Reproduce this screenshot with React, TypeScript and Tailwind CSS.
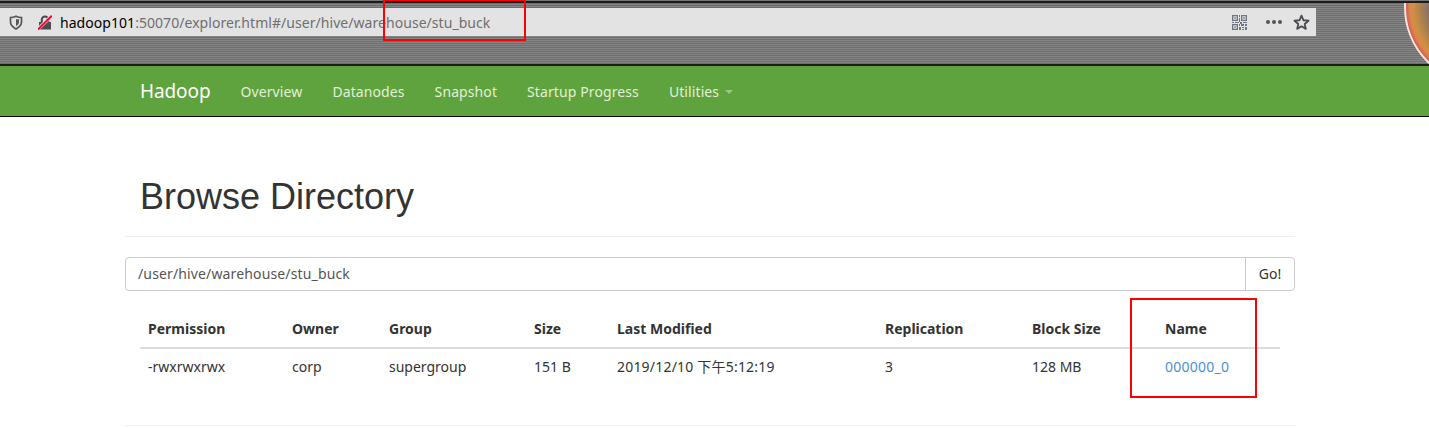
const font = 'font-["Noto_Sans","Noto_Sans_CJK_SC",sans-serif]';

const navItems = ['Overview', 'Datanodes', 'Snapshot', 'Startup Progress'];

const headers = [
  { label: 'Permission', w: 'w-[144px]' },
  { label: 'Owner', w: 'w-[97px]' },
  { label: 'Group', w: 'w-[145px]' },
  { label: 'Size', w: 'w-[83px]' },
  { label: 'Last Modified', w: 'w-[268px]' },
  { label: 'Replication', w: 'w-[147px]' },
  { label: 'Block Size', w: 'w-[133px]' },
  { label: 'Name', w: 'flex-1' },
];

const row = ['-rwxrwxrwx', 'corp', 'supergroup', '151 B', '2019/12/10 下午5:12:19', '3', '128 MB'];

function ShieldIcon() {
  return (
    <svg width="14" height="15" viewBox="0 0 14 15" fill="none">
      <path d="M1.5 2.5 C4.5 2.5 5.5 2 7 1.2 C8.5 2 9.5 2.5 12.5 2.5 V7 C12.5 10 10 12.4 7 14 C4 12.4 1.5 10 1.5 7 Z" stroke="#55555a" strokeWidth="1.7" />
      <path d="M7 4.2 H10 V7 C10 8.8 8.6 10.2 7 11.2 Z" fill="#55555a" />
    </svg>
  );
}

function InsecureLock() {
  return (
    <svg width="14" height="15" viewBox="0 0 14 15" fill="none">
      <path d="M1 7 H13 V14.5 H1 Z" fill="#4a4a4f" />
      <path d="M3.8 7 V4.6 A3.2 3.2 0 0 1 10.2 4.6 V7" stroke="#4a4a4f" strokeWidth="2" />
      <path d="M0 14 L13.5 1" stroke="#e3e3e3" strokeWidth="3.4" />
      <path d="M0 14.5 L13.8 0.8" stroke="#ff0039" strokeWidth="2" />
    </svg>
  );
}

function QrIcon() {
  return (
    <svg width="15" height="15" viewBox="0 0 15 15" fill="#6f7680">
      <path fillRule="evenodd" d="M0 0H6V6H0ZM1.3 1.3V4.7H4.7V1.3ZM9 0H15V6H9ZM10.3 1.3V4.7H13.7V1.3ZM0 9H6V15H0ZM1.3 10.3V13.7H4.7V10.3Z" />
      <path d="M2.3 2.3H3.7V3.7H2.3ZM11.3 2.3H12.7V3.7H11.3ZM2.3 11.3H3.7V12.7H2.3ZM7 0H8V2H7ZM7 3H8V7H7ZM0 7H2V8H0ZM3 7H7V8H3ZM8 7H10V9H8ZM11 7H15V8H11ZM7 9H8V11H7ZM9 9H12V11H9ZM13 9H15V11H13ZM7 12H9V15H7ZM10 12H12V13H10ZM13 12H15V15H13ZM10 14H12V15H10Z" />
    </svg>
  );
}

function StarIcon() {
  return (
    <svg width="17" height="17" viewBox="0 0 16 16" fill="none">
      <path d="M8 1.6 L9.9 5.9 L14.6 6.3 L11 9.4 L12.1 14 L8 11.6 L3.9 14 L5 9.4 L1.4 6.3 L6.1 5.9 Z" stroke="#4a4a4f" strokeWidth="1.7" strokeLinejoin="round" />
    </svg>
  );
}

function BrowserBar() {
  return (
    <div className="h-[66px] bg-[#777] pt-px">
      <div className="relative h-[65px] overflow-hidden border-y-2 border-[#1c1c1c] bg-[repeating-linear-gradient(180deg,#6e6e6e_0px,#6e6e6e_1px,#858585_1px,#858585_2px)] pt-[5px]">
        <div className="flex h-[28px] w-[1316px] items-center bg-[#e3e3e3] pl-[9px] pr-[6px] text-[14px]">
          <ShieldIcon />
          <span className="ml-[15px]"><InsecureLock /></span>
          <span className="ml-[8px] tracking-[0.05px] text-black">hadoop101<span className="text-[#6f6f6f]">:50070/explorer.html#/user/hive/warehouse/stu_buck</span></span>
          <span className="ml-auto"><QrIcon /></span>
          <span className="ml-[19px] flex gap-[2px]">
            <i className="size-[4px] rounded-full bg-[#55555a]" />
            <i className="size-[4px] rounded-full bg-[#55555a]" />
            <i className="size-[4px] rounded-full bg-[#55555a]" />
          </span>
          <span className="ml-[11px]"><StarIcon /></span>
        </div>
        {/* desktop wallpaper peeking through at the right edge */}
        <div className="absolute left-[1404px] top-[-74px] size-[156px] rounded-full border-[2px] border-[#f7e6dc] bg-[radial-gradient(circle_closest-side,#86736a_0%,#86736a_70%,#a9804f_80%,#cf8f45_90%,#d98a45_95%,#d9605a_99%)]" />
      </div>
    </div>
  );
}

export default function App() {
  return (
    <div className={`${font} relative h-[428px] w-[1429px] overflow-hidden bg-white text-[14px] text-[#333]`}>
      <BrowserBar />

      <nav className="flex h-[51px] items-center border-b border-black bg-[#5fa33e] pl-[140px]">
        <span className="text-[19px] tracking-[-0.1px] text-white">Hadoop</span>
        <div className="ml-[30px] flex gap-[30px] tracking-[0.1px] text-[#e3efd8]">
          {navItems.map((item) => (
            <span key={item}>{item}</span>
          ))}
          <span className="flex items-center">
            Utilities
            <i className="ml-[6px] mt-[2px] border-x-[4px] border-t-[4px] border-x-transparent border-t-[#9cc585]" />
          </span>
        </div>
      </nav>

      <main className="mx-[125px] w-[1170px]">
        <div className="mt-[60px] border-b border-[#eee] pb-[19px] pl-[15px]">
          <h1 className="font-['Liberation_Sans'] text-[36px] leading-[40px]">Browse Directory</h1>
        </div>

        <div className="mt-[20px] flex h-[34px] rounded-[4px] border border-[#ccc]">
          <div className="flex flex-1 items-center pb-[2px] pl-[12px] tracking-[0.14px] text-[#555]">/user/hive/warehouse/stu_buck</div>
          <div className="flex w-[49px] items-center justify-center border-l border-[#ccc] pb-[2px]">Go!</div>
        </div>

        <div className="mx-[15px] mt-[21px]">
          <div className="flex h-[37px] items-center border-b-2 border-[#ddd] pb-[2px] pl-[8px] font-bold">
            {headers.map((h) => (
              <span key={h.label} className={h.w}>{h.label}</span>
            ))}
          </div>
          <div className="flex h-[37px] items-center pb-[2px] pl-[8px]">
            {row.map((cell, i) => (
              <span key={cell} className={`${headers[i].w} ${i === 4 ? 'tracking-[0.2px]' : ''}`}>{cell}</span>
            ))}
            <span className="flex-1 tracking-[0.25px] text-[#4a8fd6]">000000_0</span>
          </div>
        </div>

        <div className="mt-[39px] border-b border-[#eee]" />
      </main>

      {/* red annotation boxes drawn over the screenshot */}
      <div className="absolute left-[383px] top-[-1px] h-[42px] w-[143px] border-2 border-[#ff0000]" />
      <div className="absolute left-[1130px] top-[298px] h-[100px] w-[127px] border-2 border-[#ff0000]" />
    </div>
  );
}
